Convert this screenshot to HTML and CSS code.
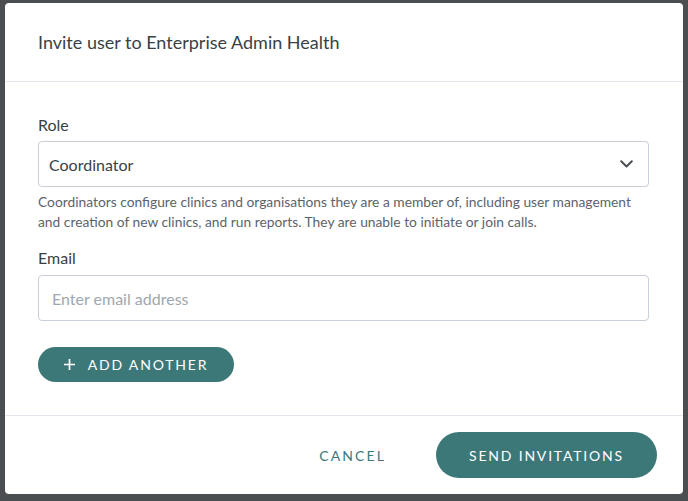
FILE: index.html
```html
<!DOCTYPE html>
<html lang="en">
<head>
<meta charset="utf-8">
<title>Invite user</title>
<link rel="stylesheet" href="styles.css">
</head>
<body>
<div class="modal">
  <div class="modal-header">
    <h1 class="modal-title">Invite user to Enterprise Admin Health</h1>
  </div>
  <div class="modal-body">
    <label class="field-label">Role</label>
    <div class="select">
      <span class="select-value">Coordinator</span>
      <svg class="chevron" width="13" height="8" viewBox="0 0 13 8"><path d="M1.2 1.2 L6.5 6.5 L11.8 1.2" fill="none" stroke="#4a4f55" stroke-width="2" stroke-linecap="round" stroke-linejoin="round"/></svg>
    </div>
    <p class="help">Coordinators configure clinics and organisations they are a member of, including user management and creation of new clinics, and run reports. They are unable to initiate or join calls.</p>
    <label class="field-label email-label">Email</label>
    <div class="input"><span class="placeholder">Enter email address</span></div>
    <button class="btn btn-add"><svg class="plus" width="11" height="11" viewBox="0 0 11 11"><path d="M5.5 0 V11 M0 5.5 H11" stroke="#fff" stroke-width="1.7"/></svg><span>ADD ANOTHER</span></button>
  </div>
  <div class="modal-footer">
    <button class="btn-link">CANCEL</button>
    <button class="btn btn-send">SEND INVITATIONS</button>
  </div>
</div>
</body>
</html>
```
FILE: styles.css
```css
* { box-sizing: border-box; }
html, body { margin: 0; padding: 0; }
body {
  background: #4a4e51;
  font-family: Lato, "Noto Sans", sans-serif;
  color: #3a3f45;
  width: 688px;
  height: 501px;
  overflow: hidden;
  padding: 3px 5px 0 5px;
}
.modal {
  width: 678px;
  height: 491px;
  background: #fff;
  border-radius: 4px;
  display: flex;
  flex-direction: column;
}
.modal-header {
  height: 79px;
  border-bottom: 1px solid #e2e7ee;
  display: flex;
  align-items: center;
  padding: 0 33px;
}
.modal-title {
  margin: 0;
  font-size: 18px;
  font-weight: 400;
  color: #3a3f45;
}
.modal-body {
  height: 334px;
  border-bottom: 1px solid #e2e7ee;
  padding: 33px 34px 0 33px;
  display: flex;
  flex-direction: column;
  align-items: stretch;
}
.field-label {
  font-size: 16px;
  line-height: 20px;
  color: #3a3f45;
}
.select, .input {
  height: 46px;
  border: 1px solid #c9cfd7;
  border-radius: 4px;
  display: flex;
  align-items: center;
  margin-top: 6px;
}
.select {
  justify-content: space-between;
  padding: 0 15px 0 10px;
}
.select-value {
  font-size: 16px;
  color: #3a3f45;
}
.chevron { display: block; }
.help {
  margin: 5px 0 0 0;
  font-size: 13.8px;
  line-height: 20px;
  color: #5c636b;
}
.email-label { margin-top: 16px; }
.input {
  margin-top: 7px;
  padding: 0 13px;
}
.placeholder {
  font-size: 16px;
  color: #a0a7ae;
}
.btn {
  border: none;
  background: #3d7878;
  color: #fff;
  font-family: inherit;
  border-radius: 999px;
  letter-spacing: 1.8px;
  font-size: 14px;
  display: flex;
  align-items: center;
  justify-content: center;
  cursor: pointer;
}
.btn-add {
  align-self: flex-start;
  margin-top: 26px;
  width: 196px;
  height: 35px;
  gap: 13px;
  padding: 0;
}
.plus { display: block; }
.modal-footer {
  flex: 1;
  display: flex;
  align-items: center;
  justify-content: flex-end;
  padding: 0 26px 0 0;
  gap: 50px;
}
.btn-link {
  border: none;
  background: none;
  padding: 0;
  font-family: inherit;
  font-size: 14px;
  letter-spacing: 2.1px;
  color: #3d7878;
}
.btn-send {
  width: 221px;
  height: 46px;
  padding: 0;
}
```
